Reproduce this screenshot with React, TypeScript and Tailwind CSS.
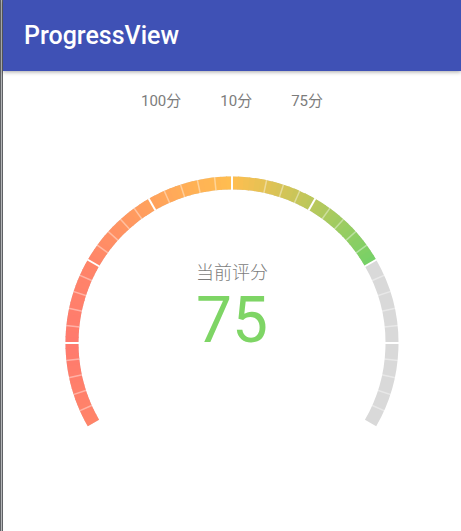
import { useState } from "react";

const SCORES = [100, 10, 75];

const START_ANGLE = 150;
const SWEEP = 240;
const CENTER = 168;
const RADIUS = 160;
const BAND = 13;

const STOPS: [number, number[]][] = [
  [150, [255, 132, 105]],
  [180, [255, 122, 109]],
  [210, [255, 133, 105]],
  [270, [255, 190, 80]],
  [332, [112, 210, 104]],
  [390, [112, 210, 104]],
];

function colorAt(angle: number) {
  for (let i = 1; i < STOPS.length; i++) {
    const [from, a] = STOPS[i - 1];
    const [to, b] = STOPS[i];
    if (angle <= to) {
      const t = (angle - from) / (to - from);
      return `rgb(${a.map((v, k) => Math.round(v + (b[k] - v) * t)).join(",")})`;
    }
  }
  return "rgb(112,210,104)";
}

function point(angle: number, radius: number) {
  const rad = (angle * Math.PI) / 180;
  return [CENTER + radius * Math.cos(rad), CENTER + radius * Math.sin(rad)];
}

function arc(from: number, to: number) {
  const [x1, y1] = point(from, RADIUS);
  const [x2, y2] = point(to, RADIUS);
  return `M${x1} ${y1}A${RADIUS} ${RADIUS} 0 ${to - from > 180 ? 1 : 0} 1 ${x2} ${y2}`;
}

function Gauge({ score }: { score: number }) {
  const end = START_ANGLE + (SWEEP * score) / 100;
  const slices: number[] = [];
  for (let a = START_ANGLE; a < end; a += 2) slices.push(a);
  const ticks: number[] = [];
  for (let a = START_ANGLE + 6; a < START_ANGLE + SWEEP; a += 6) {
    if (a !== 276) ticks.push(a);
  }

  return (
    <svg viewBox="0 0 336 264" className="block w-full" role="img" aria-label={`当前评分 ${score}`}>
      <g fill="none" strokeWidth={BAND}>
        <path d={arc(START_ANGLE, START_ANGLE + SWEEP)} stroke="#d9d9d9" />
        {slices.map((a) => (
          <path key={a} d={arc(a, Math.min(a + 2.3, end))} stroke={colorAt(a + 1)} />
        ))}
      </g>
      {ticks.map((a) => {
        const major = a % 30 === 0;
        const [x1, y1] = point(a, RADIUS - 7);
        const [x2, y2] = point(a, RADIUS + 7);
        return (
          <line
            key={a}
            x1={x1}
            y1={y1}
            x2={x2}
            y2={y2}
            stroke="#fff"
            strokeWidth={major ? 2 : 1.5}
            strokeOpacity={major ? 1 : 0.4}
          />
        );
      })}
    </svg>
  );
}

export default function App() {
  const [score, setScore] = useState(75);

  return (
    <div className="flex min-h-screen bg-white font-[Roboto,'Noto_Sans_CJK_SC',sans-serif]">
      <div className="w-[3px] shrink-0 border-x border-[#606266] bg-[#b4b6b8]" />
      <div className="min-w-0 flex-1">
        <header className="flex h-[71px] items-center bg-[#3f51b5] px-[21px] shadow-[0_1px_4px_rgba(0,0,0,0.35)]">
          <h1 className="text-[25px] leading-8 font-medium text-white">ProgressView</h1>
        </header>
        <main className="flex flex-col items-center">
          <div className="flex justify-center gap-[39px] pt-5">
            {SCORES.map((value) => (
              <button
                key={value}
                type="button"
                onClick={() => setScore(value)}
                className="text-[15px] leading-5 text-[#7c7c7c]"
              >
                {value}分
              </button>
            ))}
          </div>
          <div className="relative mt-16 w-[336px] max-w-full">
            <Gauge score={score} />
            <div className="absolute inset-x-0 top-[86px] flex flex-col items-center">
              <p className="text-[18px] leading-6 font-light text-[#7c7c7c]">当前评分</p>
              <p className="text-[64px] leading-[72px] text-[#7ed565]">{score}</p>
            </div>
          </div>
        </main>
      </div>
    </div>
  );
}
